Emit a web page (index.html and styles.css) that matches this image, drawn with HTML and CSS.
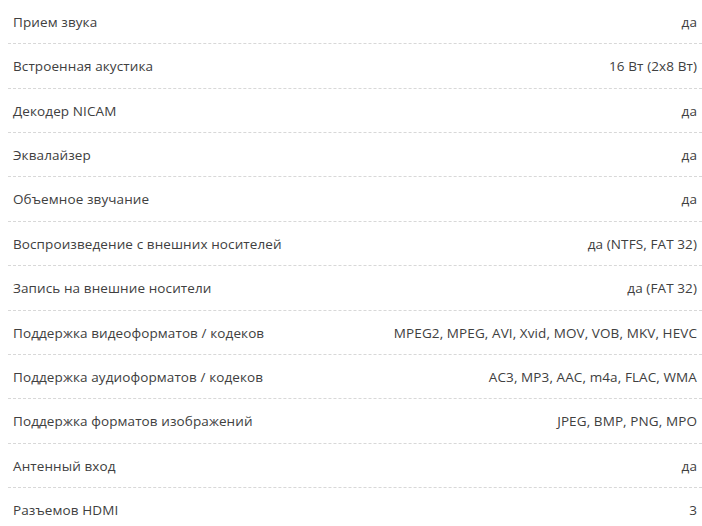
FILE: index.html
```html
<!DOCTYPE html>
<html lang="ru">
<head>
<meta charset="utf-8">
<link rel="stylesheet" href="styles.css">
</head>
<body>
<div class="specs">
  <div class="row"><span class="name">Прием звука</span><span class="val">да</span></div>
  <div class="row"><span class="name">Встроенная акустика</span><span class="val">16 Вт (2x8 Вт)</span></div>
  <div class="row"><span class="name">Декодер NICAM</span><span class="val">да</span></div>
  <div class="row"><span class="name">Эквалайзер</span><span class="val">да</span></div>
  <div class="row"><span class="name">Объемное звучание</span><span class="val">да</span></div>
  <div class="row"><span class="name">Воспроизведение с внешних носителей</span><span class="val">да (NTFS, FAT 32)</span></div>
  <div class="row"><span class="name">Запись на внешние носители</span><span class="val">да (FAT 32)</span></div>
  <div class="row"><span class="name">Поддержка видеоформатов / кодеков</span><span class="val">MPEG2, MPEG, AVI, Xvid, MOV, VOB, MKV, HEVC</span></div>
  <div class="row"><span class="name">Поддержка аудиоформатов / кодеков</span><span class="val">AC3, MP3, AAC, m4a, FLAC, WMA</span></div>
  <div class="row"><span class="name">Поддержка форматов изображений</span><span class="val">JPEG, BMP, PNG, MPO</span></div>
  <div class="row"><span class="name">Антенный вход</span><span class="val">да</span></div>
  <div class="row"><span class="name">Разъемов HDMI</span><span class="val">3</span></div>
</div>
</body>
</html>
```

FILE: styles.css
```css
html, body {
  margin: 0;
  padding: 0;
  background: #fff;
}
body {
  font-family: "Open Sans", "Noto Sans", sans-serif;
  font-size: 13.5px;
  letter-spacing: 0.1px;
  color: #404040;
}
.specs {
  margin-left: 8px;
}
.row {
  display: flex;
  justify-content: space-between;
  padding: 12px 5px 11px 5px;
  line-height: 20.36px;
  border-bottom: 1px dashed #d8d8d8;
}
```
